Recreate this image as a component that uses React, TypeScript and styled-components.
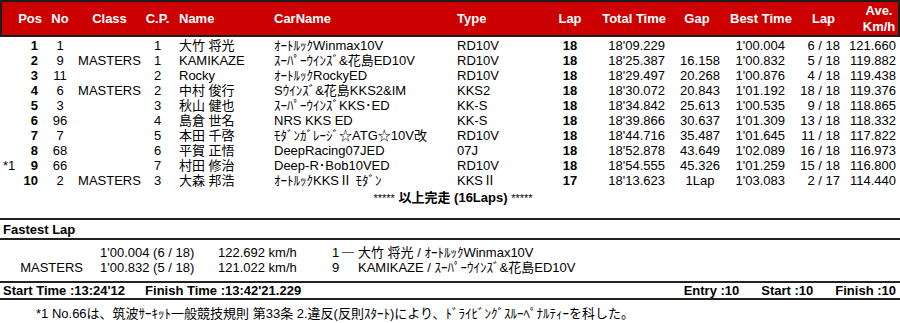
import styled, { createGlobalStyle } from "styled-components";

const GlobalStyle = createGlobalStyle`
  html, body {
    margin: 0;
    padding: 0;
    background: #ffffff;
  }
  body {
    font-family: "Liberation Sans", Arial, "Noto Sans CJK JP", sans-serif;
    font-size: 13px;
    color: #000000;
  }
  *, *::before, *::after {
    box-sizing: border-box;
  }
`;

type Align = "left" | "center" | "right";

type Column = {
  key: keyof ResultRow;
  width: number;
  head: string;
  headAlign: Align;
  headPl?: number;
  headPr?: number;
  align: Align;
  pl?: number;
  pr?: number;
  bold?: boolean;
};

type ResultRow = {
  note: string;
  pos: string;
  no: string;
  cls: string;
  cp: string;
  name: string;
  car: string;
  type: string;
  lap: string;
  total: string;
  gap: string;
  best: string;
  bestLap: string;
  ave: string;
};

const columns: Column[] = [
  { key: "note", width: 14, head: "", headAlign: "left", align: "left", pl: 3 },
  { key: "pos", width: 28, head: "Pos", headAlign: "right", align: "right", pr: 4, bold: true },
  { key: "no", width: 36, head: "No", headAlign: "center", align: "center" },
  { key: "cls", width: 63, head: "Class", headAlign: "center", align: "center" },
  { key: "cp", width: 33, head: "C.P.", headAlign: "center", align: "center" },
  { key: "name", width: 100, head: "Name", headAlign: "left", headPl: 5, align: "left", pl: 5 },
  { key: "car", width: 183, head: "CarName", headAlign: "left", align: "left" },
  { key: "type", width: 91, head: "Type", headAlign: "left", align: "left" },
  { key: "lap", width: 44, head: "Lap", headAlign: "center", align: "center", bold: true },
  { key: "total", width: 78, head: "Total Time", headAlign: "right", headPr: 4, align: "right", pr: 5 },
  { key: "gap", width: 60, head: "Gap", headAlign: "center", headPr: 6, align: "center" },
  { key: "best", width: 60, head: "Best Time", headAlign: "right", headPr: 5, align: "right", pr: 5 },
  { key: "bestLap", width: 55, head: "Lap", headAlign: "center", headPl: 12, align: "right", pr: 5 },
  { key: "ave", width: 55, head: "Ave.\nKm/h", headAlign: "center", headPl: 13, align: "right", pr: 4 },
];

const gridTemplate = columns.map((c) => `${c.width}px`).join(" ");

const rows: ResultRow[] = [
  { note: "", pos: "1", no: "1", cls: "", cp: "1", name: "大竹 将光", car: "ｵｰﾄﾙｯｸWinmax10V", type: "RD10V", lap: "18", total: "18'09.229", gap: "", best: "1'00.004", bestLap: "6 / 18", ave: "121.660" },
  { note: "", pos: "2", no: "9", cls: "MASTERS", cp: "1", name: "KAMIKAZE", car: "ｽｰﾊﾟｰｳｲﾝｽﾞ&花島ED10V", type: "RD10V", lap: "18", total: "18'25.387", gap: "16.158", best: "1'00.832", bestLap: "5 / 18", ave: "119.882" },
  { note: "", pos: "3", no: "11", cls: "", cp: "2", name: "Rocky", car: "ｵｰﾄﾙｯｸRockyED", type: "RD10V", lap: "18", total: "18'29.497", gap: "20.268", best: "1'00.876", bestLap: "4 / 18", ave: "119.438" },
  { note: "", pos: "4", no: "6", cls: "MASTERS", cp: "2", name: "中村 俊行", car: "Sｳｲﾝｽﾞ&花島KKS2&IM", type: "KKS2", lap: "18", total: "18'30.072", gap: "20.843", best: "1'01.192", bestLap: "18 / 18", ave: "119.376" },
  { note: "", pos: "5", no: "3", cls: "", cp: "3", name: "秋山 健也", car: "ｽｰﾊﾟｰｳｲﾝｽﾞKKS･ED", type: "KK-S", lap: "18", total: "18'34.842", gap: "25.613", best: "1'00.535", bestLap: "9 / 18", ave: "118.865" },
  { note: "", pos: "6", no: "96", cls: "", cp: "4", name: "島倉 世名", car: "NRS KKS ED", type: "KK-S", lap: "18", total: "18'39.866", gap: "30.637", best: "1'01.309", bestLap: "13 / 18", ave: "118.332" },
  { note: "", pos: "7", no: "7", cls: "", cp: "5", name: "本田 千啓", car: "ﾓﾀﾞﾝｶﾞﾚｰｼﾞ☆ATG☆10V改", type: "RD10V", lap: "18", total: "18'44.716", gap: "35.487", best: "1'01.645", bestLap: "11 / 18", ave: "117.822" },
  { note: "", pos: "8", no: "68", cls: "", cp: "6", name: "平賀 正悟", car: "DeepRacing07JED", type: "07J", lap: "18", total: "18'52.878", gap: "43.649", best: "1'02.089", bestLap: "16 / 18", ave: "116.973" },
  { note: "*1", pos: "9", no: "66", cls: "", cp: "7", name: "村田 修治", car: "Deep-R･Bob10VED", type: "RD10V", lap: "18", total: "18'54.555", gap: "45.326", best: "1'01.259", bestLap: "15 / 18", ave: "116.800" },
  { note: "", pos: "10", no: "2", cls: "MASTERS", cp: "3", name: "大森 邦浩", car: "ｵｰﾄﾙｯｸKKSⅡ ﾓﾀﾞﾝ", type: "KKSⅡ", lap: "17", total: "18'13.623", gap: "1Lap", best: "1'03.083", bestLap: "2 / 17", ave: "114.440" },
];

const fastest = [
  { cls: "", time: "1'00.004 (6 / 18)", speed: "122.692 km/h", no: "1", dash: true, who: "大竹 将光 / ｵｰﾄﾙｯｸWinmax10V" },
  { cls: "MASTERS", time: "1'00.832 (5 / 18)", speed: "121.022 km/h", no: "9", dash: false, who: "KAMIKAZE / ｽｰﾊﾟｰｳｲﾝｽﾞ&花島ED10V" },
];

const Page = styled.div`
  width: 900px;
  height: 323px;
  overflow: hidden;
`;

const HeadBar = styled.div`
  display: grid;
  grid-template-columns: ${gridTemplate};
  align-items: center;
  height: 37px;
  background: #cc0000;
  box-shadow: inset 0 0 0 2px #1c1c1c;
  color: #ffffff;
  font-weight: 700;
`;

const HeadCell = styled.div<{ $align: Align; $pl?: number; $pr?: number }>`
  text-align: ${({ $align }) => $align};
  padding-left: ${({ $pl }) => $pl ?? 0}px;
  padding-right: ${({ $pr }) => $pr ?? 0}px;
  white-space: pre;
  line-height: 16px;
`;

const Body = styled.div`
  padding-top: 1px;
`;

const Row = styled.div`
  display: grid;
  grid-template-columns: ${gridTemplate};
  height: 15px;
  line-height: 15px;
`;

const Cell = styled.div<{ $align: Align; $pl?: number; $pr?: number; $bold?: boolean }>`
  text-align: ${({ $align }) => $align};
  padding-left: ${({ $pl }) => $pl ?? 0}px;
  padding-right: ${({ $pr }) => $pr ?? 0}px;
  font-weight: ${({ $bold }) => ($bold ? 700 : 400)};
  white-space: nowrap;
`;

const Finished = styled.div`
  margin-top: 2px;
  height: 15px;
  line-height: 15px;
  text-align: center;
  font-weight: 700;
  padding-left: 6px;
`;

const Stars = styled.span`
  font-weight: 400;
  font-size: 11px;
`;

const SectionBar = styled.div<{ $mt: number; $h: number }>`
  display: flex;
  align-items: center;
  justify-content: space-between;
  margin-top: ${({ $mt }) => $mt}px;
  height: ${({ $h }) => $h}px;
  border-top: 2px solid #222222;
  border-bottom: 2px solid #222222;
  padding: 0 4px 0 3px;
  font-weight: 700;
`;

const BarGroup = styled.div<{ $gap: number }>`
  display: flex;
  gap: ${({ $gap }) => $gap}px;
`;

const FastList = styled.div`
  padding-top: 5px;
`;

const FastRow = styled.div`
  display: grid;
  grid-template-columns: 90px 128px 108px 32px 1fr;
  height: 15px;
  line-height: 15px;
  white-space: nowrap;
`;

const FastClass = styled.div`
  text-align: right;
  padding-right: 7px;
`;

const FastTime = styled.div`
  padding-left: 10px;
`;

const FastNo = styled.div`
  display: flex;
  align-items: center;
  padding-left: 6px;
`;

const Dash = styled.span`
  display: inline-block;
  width: 12px;
  height: 1px;
  margin-left: 3px;
  background: #555555;
`;

const Footnote = styled.div`
  margin-top: 6px;
  padding-left: 36px;
  height: 15px;
  line-height: 15px;
  white-space: nowrap;
`;

export default function App() {
  return (
    <Page>
      <GlobalStyle />
      <HeadBar>
        {columns.map((c) => (
          <HeadCell key={c.key} $align={c.headAlign} $pl={c.headPl} $pr={c.headPr}>
            {c.head}
          </HeadCell>
        ))}
      </HeadBar>

      <Body>
        {rows.map((r) => (
          <Row key={r.pos}>
            {columns.map((c) => (
              <Cell key={c.key} $align={c.align} $pl={c.pl} $pr={c.pr} $bold={c.bold}>
                {r[c.key]}
              </Cell>
            ))}
          </Row>
        ))}
        <Finished>
          <Stars>*****</Stars> 以上完走 (16Laps) <Stars>*****</Stars>
        </Finished>
      </Body>

      <SectionBar $mt={13} $h={22}>
        Fastest Lap
      </SectionBar>
      <FastList>
        {fastest.map((f) => (
          <FastRow key={f.no}>
            <FastClass>{f.cls}</FastClass>
            <FastTime>{f.time}</FastTime>
            <div>{f.speed}</div>
            <FastNo>
              {f.no}
              {f.dash && <Dash />}
            </FastNo>
            <div>{f.who}</div>
          </FastRow>
        ))}
      </FastList>

      <SectionBar $mt={6} $h={19}>
        <BarGroup $gap={20}>
          <span>Start Time :13:24'12</span>
          <span>Finish Time :13:42'21.229</span>
        </BarGroup>
        <BarGroup $gap={22}>
          <span>Entry :10</span>
          <span>Start :10</span>
          <span>Finish :10</span>
        </BarGroup>
      </SectionBar>

      <Footnote>
        *1 No.66は、筑波ｻｰｷｯﾄ一般競技規則 第33条 2.違反(反則ｽﾀｰﾄ)により、ﾄﾞﾗｲﾋﾞﾝｸﾞｽﾙｰﾍﾟﾅﾙﾃｨｰを科した。
      </Footnote>
    </Page>
  );
}
